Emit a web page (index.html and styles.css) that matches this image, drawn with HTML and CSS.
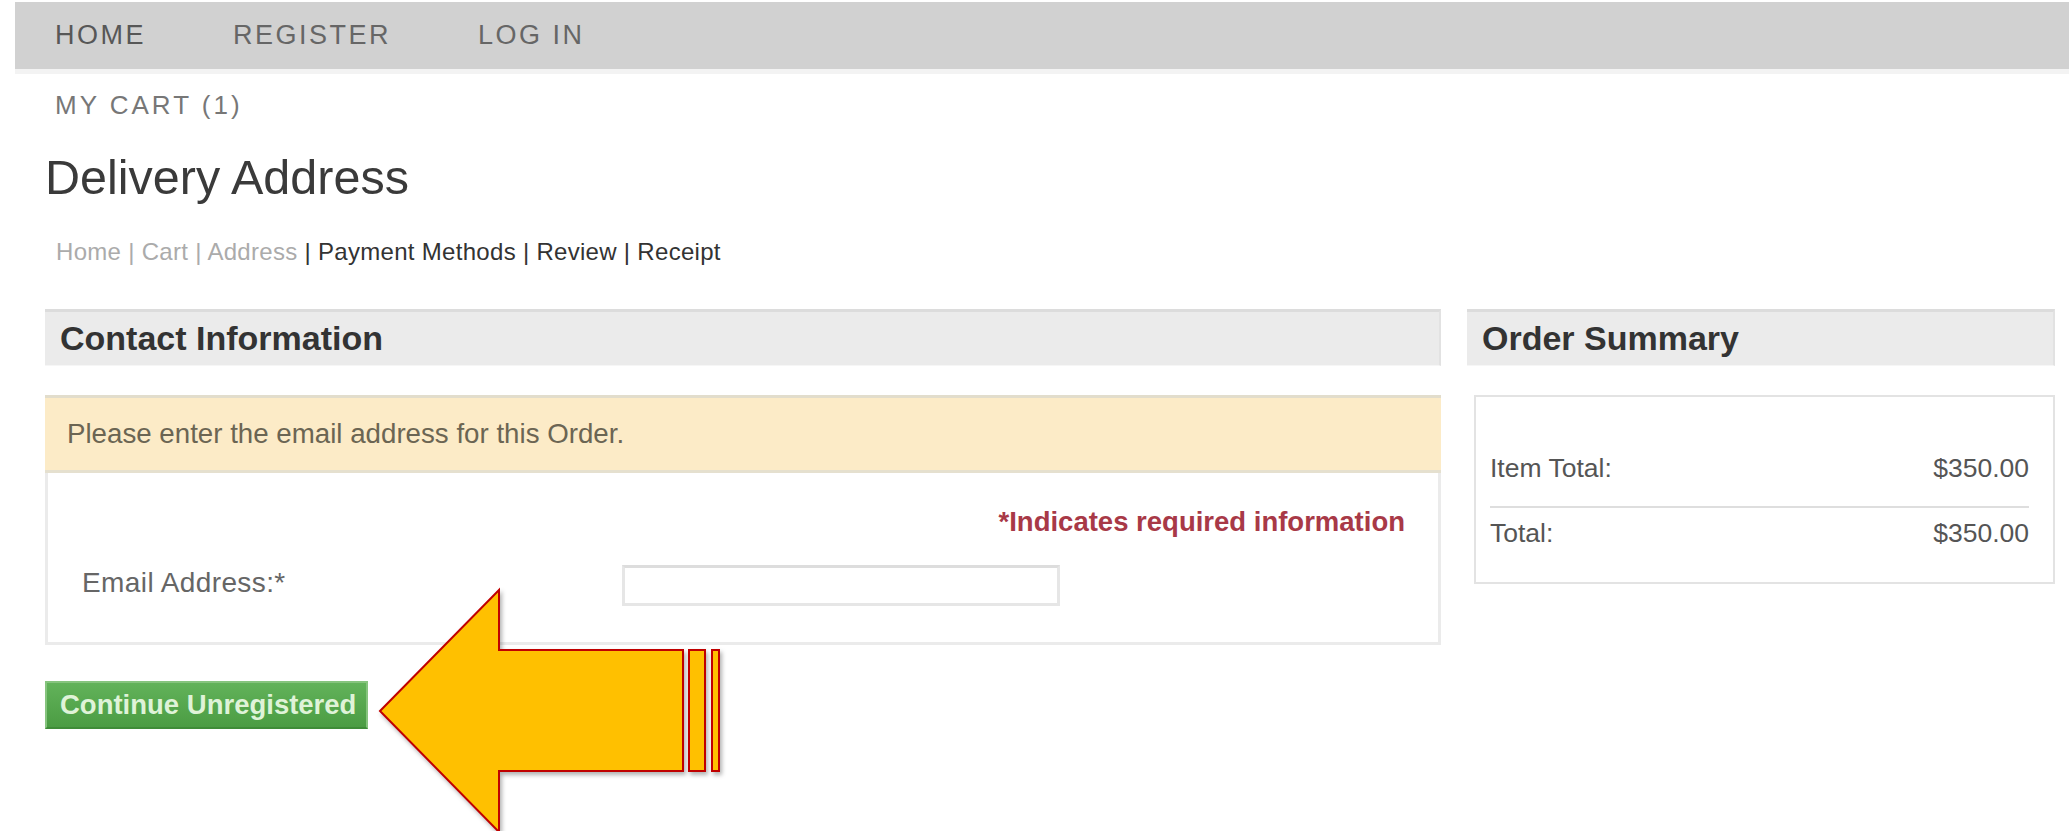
FILE: index.html
```html
<!DOCTYPE html>
<html lang="en">
<head>
<meta charset="utf-8">
<title>Delivery Address</title>
<link rel="stylesheet" href="styles.css">
</head>
<body>
  <nav class="topnav">
    <a class="topnav-link topnav-home" href="#">HOME</a>
    <a class="topnav-link" href="#">REGISTER</a>
    <a class="topnav-link" href="#">LOG IN</a>
  </nav>

  <main class="page">
    <a class="cart-link" href="#">MY CART (1)</a>
    <h1 class="page-title">Delivery Address</h1>

    <div class="steps">
      <span class="step-done">Home | Cart | Address</span> | Payment Methods | Review | Receipt
    </div>

    <div class="columns">
      <section class="col-main">
        <h2 class="box-title">Contact Information</h2>
        <div class="panel">
          <div class="alert">Please enter the email address for this Order.</div>
          <div class="panel-body">
            <p class="required-note">*Indicates required information</p>
            <div class="form-row">
              <label class="form-label" for="email">Email Address:*</label>
              <input class="form-input" id="email" type="text">
            </div>
          </div>
        </div>
        <button class="btn-continue" type="button">Continue Unregistered</button>
      </section>

      <aside class="col-side">
        <h2 class="box-title">Order Summary</h2>
        <div class="summary">
          <div class="summary-row summary-row-first">
            <span>Item Total:</span><span>$350.00</span>
          </div>
          <div class="summary-row">
            <span>Total:</span><span>$350.00</span>
          </div>
        </div>
      </aside>
    </div>
  </main>

  <svg class="callout-arrow" width="360" height="251" viewBox="0 0 360 251" aria-hidden="true">
    <polygon points="10,131 129,10 129,70 313,70 313,191 129,191 129,252"
             fill="#ffc000" stroke="#c00000" stroke-width="2" stroke-linejoin="miter"/>
    <rect x="319" y="70" width="16" height="121" fill="#ffc000" stroke="#c00000" stroke-width="2"/>
    <rect x="342" y="70" width="7" height="121" fill="#ffc000" stroke="#c00000" stroke-width="2"/>
  </svg>
</body>
</html>
```

FILE: styles.css
```css
html, body {
  margin: 0;
  padding: 0;
  overflow: hidden;
  background: #ffffff;
}

body {
  font-family: "Liberation Sans", Arial, sans-serif;
  color: #555555;
  position: relative;
  min-height: 831px;
}

/* top navigation bar */
.topnav {
  display: flex;
  margin: 2px 0 0 15px;
  padding-left: 40px;
  height: 67px;
  background: #d1d1d1;
  border-bottom: 5px solid #f3f3f3;
}

.topnav-link {
  font-size: 27px;
  letter-spacing: 2.5px;
  line-height: 67px;
  color: #666666;
  text-decoration: none;
  margin-right: 87px;
}

.topnav-home {
  color: #575757;
}

/* page body */
.page {
  padding: 0 14px 0 45px;
}

.cart-link {
  display: block;
  margin: 16px 0 0 10px;
  font-size: 26px;
  letter-spacing: 3px;
  line-height: 30px;
  color: #777777;
  text-decoration: none;
}

.page-title {
  margin: 30px 0 0 0;
  font-size: 48.5px;
  font-weight: normal;
  line-height: 54px;
  color: #3a3a3a;
}

.steps {
  margin: 34px 0 0 11px;
  font-size: 24px;
  letter-spacing: 0.3px;
  line-height: 28px;
  color: #333333;
}

.step-done {
  color: #ababab;
}

/* two-column checkout layout */
.columns {
  display: flex;
  gap: 26px;
  margin-top: 43px;
  align-items: flex-start;
}

.col-main {
  width: 1396px;
}

.col-side {
  width: 588px;
}

.box-title {
  margin: 0;
  height: 53px;
  padding-left: 15px;
  font-size: 34px;
  font-weight: bold;
  line-height: 53px;
  color: #333333;
  background: #ebebeb;
  border-top: 3px solid #dcdcdc;
  border-right: 2px solid #e2e2e2;
  border-bottom: 1px solid #f6f6f6;
}

/* contact panel */
.panel {
  margin-top: 29px;
  border: 3px solid #ebebeb;
  border-top: 0;
}

.alert {
  height: 72px;
  padding-left: 22px;
  font-size: 27.7px;
  line-height: 72px;
  color: #6b6553;
  background: #fcebc7;
  border-top: 3px solid #e2ddcc;
  border-bottom: 3px solid #e5e0cf;
  margin: 0 -3px;
}

.panel-body {
  padding: 33px 33px 36px 34px;
}

.required-note {
  margin: 0;
  text-align: right;
  font-size: 27.5px;
  font-weight: bold;
  line-height: 32px;
  color: #a83947;
}

.form-row {
  display: grid;
  grid-template-columns: 540px 438px;
  align-items: center;
  margin-top: 27px;
}

.form-label {
  font-size: 28px;
  letter-spacing: 0.4px;
  color: #666666;
  line-height: 32px;
  padding-bottom: 6px;
}

.form-input {
  box-sizing: border-box;
  width: 438px;
  height: 41px;
  margin: 0;
  border: 3px solid #e6e6e6;
  border-top-color: #dddddd;
  background: #ffffff;
  outline: none;
}

.btn-continue {
  margin-top: 36px;
  display: block;
  height: 48px;
  padding: 0 10px 0 13px;
  font-family: "Liberation Sans", Arial, sans-serif;
  font-size: 27.5px;
  font-weight: bold;
  color: #dff3d8;
  background: linear-gradient(#62b25a, #4b9c43);
  border: 2px solid #86c47e;
  border-bottom-color: #3f8c38;
  border-radius: 0;
  cursor: pointer;
}

/* order summary */
.summary {
  margin: 29px 0 0 7px;
  border: 2px solid #e3e3e3;
  padding: 48px 24px 33px 14px;
}

.summary-row {
  display: flex;
  justify-content: space-between;
  font-size: 26.5px;
  line-height: 31px;
  color: #555555;
  padding-top: 10px;
}

.summary-row-first {
  padding: 8px 0 22px;
  border-bottom: 2px solid #dedede;
}

/* callout arrow drawn over the page */
.callout-arrow {
  position: absolute;
  left: 370px;
  top: 580px;
  filter: drop-shadow(2px 3px 2px rgba(0, 0, 0, 0.3));
}
```
